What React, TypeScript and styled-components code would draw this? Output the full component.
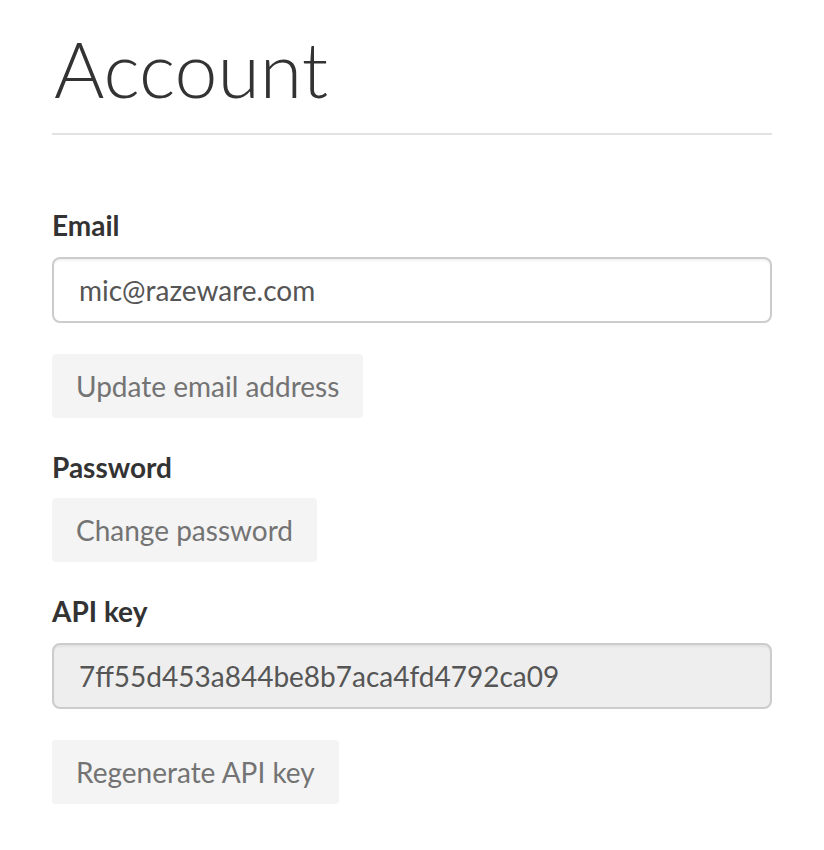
import React from "react";
import styled, { createGlobalStyle } from "styled-components";

const Global = createGlobalStyle`
  html, body { margin: 0; padding: 0; background: #fff; }
  body { font-family: "Lato", "Liberation Sans", sans-serif; color: #333; }
  * { box-sizing: border-box; }
`;

const Page = styled.div`
  width: 720px;
  margin-left: 52px;
  padding-top: 22px;
`;

const Title = styled.h1`
  margin: 0;
  font-family: "Lato", sans-serif;
  font-weight: 300;
  font-size: 77px;
  line-height: 92px;
  color: #333;
  padding-left: 2px;
`;

const Divider = styled.hr`
  margin: 19px 0 0;
  border: 0;
  border-top: 2px solid #e2e2e2;
`;

const Form = styled.div`
  display: flex;
  flex-direction: column;
  align-items: flex-start;
  padding-top: 73px;
`;

const Label = styled.label<{ $gap?: number }>`
  font-size: 28px;
  font-weight: 700;
  line-height: 34px;
  color: #333;
  margin-top: ${(p) => p.$gap ?? 0}px;
`;

const Field = styled.div<{ $readOnly?: boolean }>`
  width: 720px;
  height: 66px;
  margin-top: 15px;
  border: 2px solid #ccc;
  border-radius: 8px;
  background: ${(p) => (p.$readOnly ? "#eeeeee" : "#fff")};
  box-shadow: inset 0 2px 2px rgba(0, 0, 0, 0.05);
  display: flex;
  align-items: center;
  padding: 0 25px;
  font-size: 28px;
  color: #555;
`;

const Button = styled.button<{ $gap?: number }>`
  margin-top: ${(p) => p.$gap ?? 0}px;
  height: 64px;
  padding: 0 24px;
  border: 0;
  border-radius: 4px;
  background: #f4f4f4;
  color: #737373;
  font-family: "Lato", sans-serif;
  font-size: 28px;
  cursor: pointer;
`;

export default function App() {
  return (
    <>
      <Global />
      <Page>
        <Title>Account</Title>
        <Divider />
        <Form>
          <Label>Email</Label>
          <Field>mic@razeware.com</Field>
          <Button $gap={31}>Update email address</Button>
          <Label $gap={32}>Password</Label>
          <Button $gap={14}>Change password</Button>
          <Label $gap={32}>API key</Label>
          <Field $readOnly>7ff55d453a844be8b7aca4fd4792ca09</Field>
          <Button $gap={31}>Regenerate API key</Button>
        </Form>
      </Page>
    </>
  );
}
